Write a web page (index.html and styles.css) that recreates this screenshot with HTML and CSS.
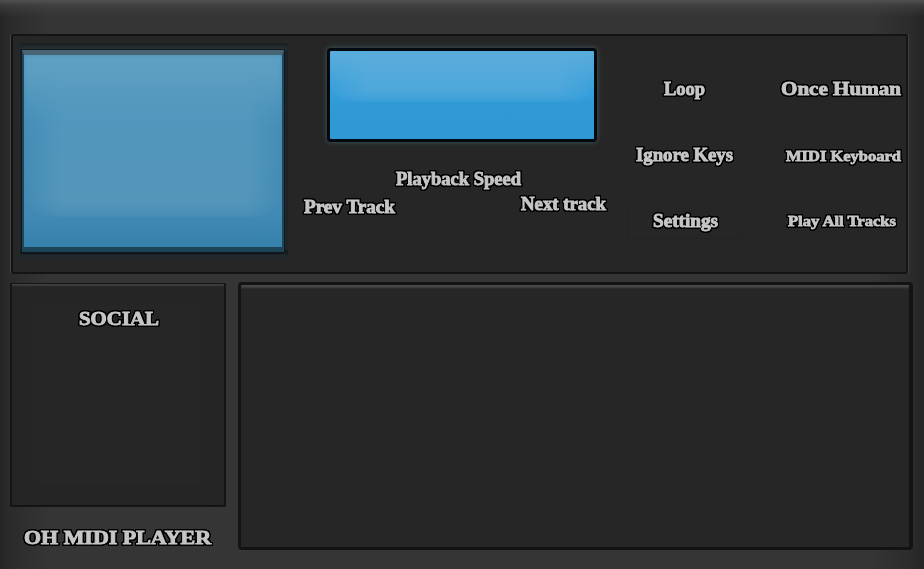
FILE: index.html
```html
<!DOCTYPE html>
<html lang="en">
<head>
<meta charset="utf-8">
<title>OH MIDI Player</title>
<link rel="stylesheet" href="styles.css">
</head>
<body>
<main class="player">
  <section class="deck">
    <div class="monitor"><div class="monitor-screen"><div class="glare"></div></div></div>
    <div class="transport">
      <div class="lcd"><div class="glare"></div></div>
      <svg class="label speed" width="125" height="24"><text y="18" textLength="125" lengthAdjust="spacingAndGlyphs">Playback Speed</text></svg>
      <div class="track-row">
        <svg class="label prev" width="91" height="24"><text y="18" textLength="91" lengthAdjust="spacingAndGlyphs">Prev Track</text></svg>
        <svg class="label" width="85" height="24"><text y="18" textLength="85" lengthAdjust="spacingAndGlyphs">Next track</text></svg>
      </div>
    </div>
    <div class="options">
      <div class="option loop"><svg class="label" width="41" height="24"><text y="18" textLength="41" lengthAdjust="spacingAndGlyphs">Loop</text></svg></div>
      <div class="option"><svg class="label large" width="120" height="24"><text y="18" textLength="120" lengthAdjust="spacingAndGlyphs">Once Human</text></svg></div>
      <div class="option ignore"><svg class="label" width="97" height="24"><text y="18" textLength="97" lengthAdjust="spacingAndGlyphs">Ignore Keys</text></svg></div>
      <div class="option keyboard"><svg class="label small" width="115" height="24"><text y="18" textLength="115" lengthAdjust="spacingAndGlyphs">MIDI Keyboard</text></svg></div>
      <div class="option settings"><svg class="label" width="65" height="24"><text y="18" textLength="65" lengthAdjust="spacingAndGlyphs">Settings</text></svg></div>
      <div class="option play-all"><svg class="label small" width="108" height="24"><text y="18" textLength="108" lengthAdjust="spacingAndGlyphs">Play All Tracks</text></svg></div>
    </div>
  </section>
  <div class="lower">
    <aside class="side">
      <section class="social">
        <svg class="label large" width="80" height="24"><text y="18" textLength="80" lengthAdjust="spacingAndGlyphs">SOCIAL</text></svg>
      </section>
      <svg class="label large brand" width="188" height="24"><text y="18" textLength="187" lengthAdjust="spacingAndGlyphs">OH MIDI PLAYER</text></svg>
    </aside>
    <section class="playlist"></section>
  </div>
</main>
</body>
</html>
```
FILE: styles.css
```css
* { box-sizing: border-box; }

body {
  margin: 0;
  font-family: "Liberation Serif", serif;
}

.player {
  width: 924px;
  height: 569px;
  padding: 34px 11px 0 10px;
  overflow: hidden;
  background:
    linear-gradient(#505050, rgba(70, 70, 70, .55) 6px, transparent 17px),
    linear-gradient(90deg, #252525, #2b2b2b 10px, transparent 50px, transparent 870px, #2b2b2b 912px, #252525),
    #353535;
}

.label {
  display: block;
  flex: none;
  overflow: visible;
  font-size: 18px;
  font-weight: 700;
  fill: #c6c6c6;
  stroke: #c6c6c6;
  stroke-width: .9px;
  filter:
    drop-shadow(1px 0 0 #000)
    drop-shadow(-1px 0 0 #000)
    drop-shadow(0 1px 0 #000)
    drop-shadow(0 -1px 0 #000)
    drop-shadow(0 0 .7px #000)
    drop-shadow(0 0 .5px #000);
}

.large { font-size: 18.5px; }
.small { font-size: 15px; stroke-width: .8px; }

.deck {
  display: flex;
  width: 897px;
  height: 240px;
  margin-left: 1px;
  border: 2px solid #141414;
  border-radius: 2px;
  background: #262626;
  box-shadow: -1px 0 0 #424242, 1px 0 0 #404040;
}

.monitor {
  flex: none;
  width: 270px;
  height: 217px;
  margin: 6px 0 0 6px;
  padding: 7px 4px 6px 3px;
  border: 1px solid #23292c;
  border-radius: 3px;
  background: linear-gradient(#1b1f20, #273034 6px, #1c2326 8px, #20282c 206px, #14191c 209px, #222b30 213px, #20292e);
  box-shadow: inset 0 0 2px #171b1d;
}

.monitor-screen {
  height: 202px;
  margin-left: -1px;
  border: 2px solid #234558;
  border-top: 5px solid #496575;
  border-bottom: 5px solid #1d4357;
  outline: 1px solid #12191d;
  background: linear-gradient(#468fb8, #3f89b4 160px, #3781ad);
  box-shadow: 0 2px 0 #0d1317;
  overflow: hidden;
}

.monitor .glare {
  height: 162px;
  background: linear-gradient(rgba(115, 175, 205, .55), rgba(115, 175, 205, .3) 65px, rgba(125, 175, 200, .35) 145px, rgba(125, 175, 200, .15));
  border-radius: 0 0 24px 24px;
  mask-image:
    linear-gradient(90deg, rgba(0, 0, 0, .15), #000 38px, #000 222px, rgba(0, 0, 0, .15)),
    linear-gradient(#000 20px, transparent 75px);
  filter: blur(2px);
}

.transport {
  flex: none;
  width: 340px;
}

.lcd {
  width: 270px;
  height: 94px;
  margin: 12px 0 25px 38px;
  border: 3px solid #030a0f;
  border-radius: 4px;
  overflow: hidden;
  background: linear-gradient(#45a5da, #349edb 45px, #2f9ad6 52px, #2e99d5);
  box-shadow: 0 0 4px 1px #3a4b50;
}

.lcd .glare {
  height: 51px;
  border-radius: 0 0 22px 22px;
  background: linear-gradient(rgba(125, 185, 220, .4), rgba(125, 185, 220, .35) 38px, rgba(125, 185, 220, .15));
  mask-image:
    linear-gradient(90deg, rgba(0, 0, 0, .2), #000 38px, #000 226px, rgba(0, 0, 0, .2)),
    linear-gradient(#000, transparent 35px);
  filter: blur(1px);
}

.speed { margin-left: 107px; }

.track-row {
  display: flex;
  gap: 126px;
  padding: 1px 0 0 15px;
}

.prev { margin-top: 3px; }

.options {
  display: grid;
  flex: none;
  grid-template-columns: 114px 120px;
  grid-template-rows: 34px 34px 35px;
  column-gap: 39px;
  row-gap: 32px;
  margin-left: -1px;
  padding-top: 36px;
}

.option {
  display: flex;
  justify-content: center;
  padding-top: 5px;
}

.loop,
.ignore { padding-right: 2px; }

.keyboard { padding-left: 5px; }

.play-all { padding: 4px 0 0 2px; }

.settings {
  padding-top: 4px;
  border: 1px solid #232323;
}

.lower {
  display: flex;
  gap: 12px;
  margin-top: 8px;
}

.side { width: 216px; }

.social {
  display: flex;
  justify-content: center;
  height: 224px;
  margin-top: 1px;
  padding: 23px 0 0 2px;
  border: solid #141414;
  border-width: 1px 2px 2px;
  border-radius: 1px;
  background: linear-gradient(#4e4e4e, #343434 2px, #262626 3px);
  box-shadow: inset 0 0 20px rgba(32, 32, 32, .3);
}

.brand { margin: 19px 0 0 14px; }

.playlist {
  width: 675px;
  height: 268px;
  border: 3px solid #131313;
  border-right-width: 4px;
  border-radius: 4px;
  background: linear-gradient(#4d4d4d, #404040 2px, #262626 4px);
}
```
